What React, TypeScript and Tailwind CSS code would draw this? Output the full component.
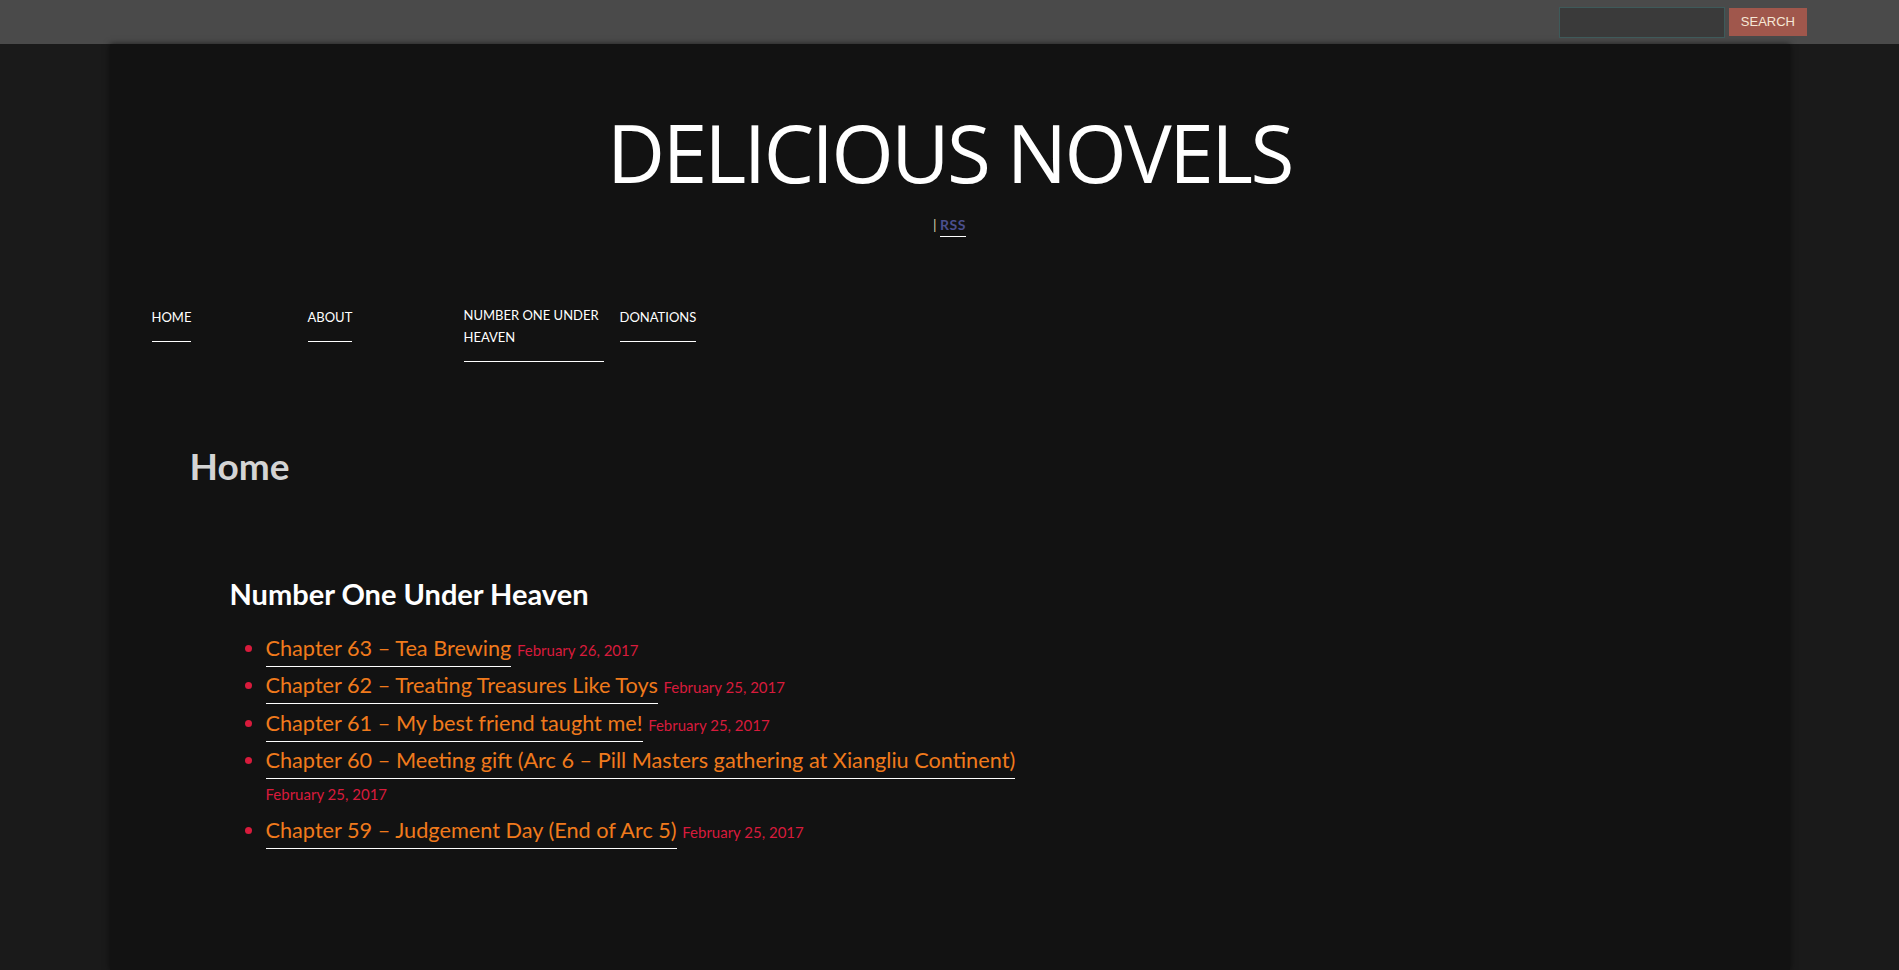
const navItems = ['Home', 'About', 'Number One Under Heaven', 'Donations'];

const chapters = [
  { title: 'Chapter 63 – Tea Brewing', date: 'February 26, 2017' },
  { title: 'Chapter 62 – Treating Treasures Like Toys', date: 'February 25, 2017' },
  { title: 'Chapter 61 – My best friend taught me!', date: 'February 25, 2017' },
  { title: 'Chapter 60 – Meeting gift (Arc 6 – Pill Masters gathering at Xiangliu Continent)', date: 'February 25, 2017' },
  { title: 'Chapter 59 – Judgement Day (End of Arc 5)', date: 'February 25, 2017' },
];

function TopBar() {
  return (
    <div className="h-[44px] bg-[#4a4a4a] flex items-center justify-end pr-[92px]">
      <form className="flex items-center gap-[4px]" onSubmit={(e) => e.preventDefault()}>
        <input
          type="text"
          className="w-[166px] h-[31px] bg-[#3a3a3a] border border-[#3e5a5a] outline-none text-white text-sm px-2"
        />
        <button className="h-[28px] px-[12px] bg-[#a0574c] text-[#f6e8d6] text-[13px] font-['Liberation_Sans',Arial,sans-serif]">
          SEARCH
        </button>
      </form>
    </div>
  );
}

export default function App() {
  return (
    <div className="min-h-screen bg-[#1a1a1a] font-['Lato',sans-serif]">
      <TopBar />
      <div className="mx-auto w-[1680px] min-h-[926px] bg-[#121212] shadow-[0_0_6px_rgba(0,0,0,0.6)]">
        <div className="pt-[68px] text-center">
          <h1 className="text-white text-[80px] leading-none font-normal tracking-[-2.5px] font-['Open_Sans',sans-serif]">
            DELICIOUS NOVELS
          </h1>
          <p className="mt-[22px] text-[14px] text-[#d8d0b0]">
            |{' '}
            <a className="font-bold text-[#4b4f8e] border-b border-white pb-[3px] tracking-[0.5px]">RSS</a>
          </p>
        </div>

        <nav className="mt-[69px] pl-[42px] flex">
          {navItems.map((item) => (
            <div key={item} className="w-[156px]">
              <a className="inline-block max-w-[140px] uppercase text-white text-[13px] leading-[22px] border-b border-white pb-[13px]">
                {item}
              </a>
            </div>
          ))}
        </nav>

        <main className="pl-[80px] pt-[76px]">
          <h2 className="text-[#d4d4d4] text-[37px] font-bold">Home</h2>
          <section className="pl-[40px] pt-[82px]">
            <h3 className="text-white text-[29px] font-bold leading-[36px]">Number One Under Heaven</h3>
            <ul className="mt-[20px] pl-[36px] list-disc marker:text-[#d81b3c]">
              {chapters.map((c) => (
                <li key={c.title} className="text-[#d81b3c] text-[21.7px] leading-[32px] mb-[5.5px] max-w-[800px]">
                  <a className="text-[#f07a1c] border-b border-white pb-[5px]">{c.title}</a>{' '}
                  <span className="text-[15px] leading-none text-[#d81b3c]">{c.date}</span>
                </li>
              ))}
            </ul>
          </section>
        </main>
      </div>
    </div>
  );
}
